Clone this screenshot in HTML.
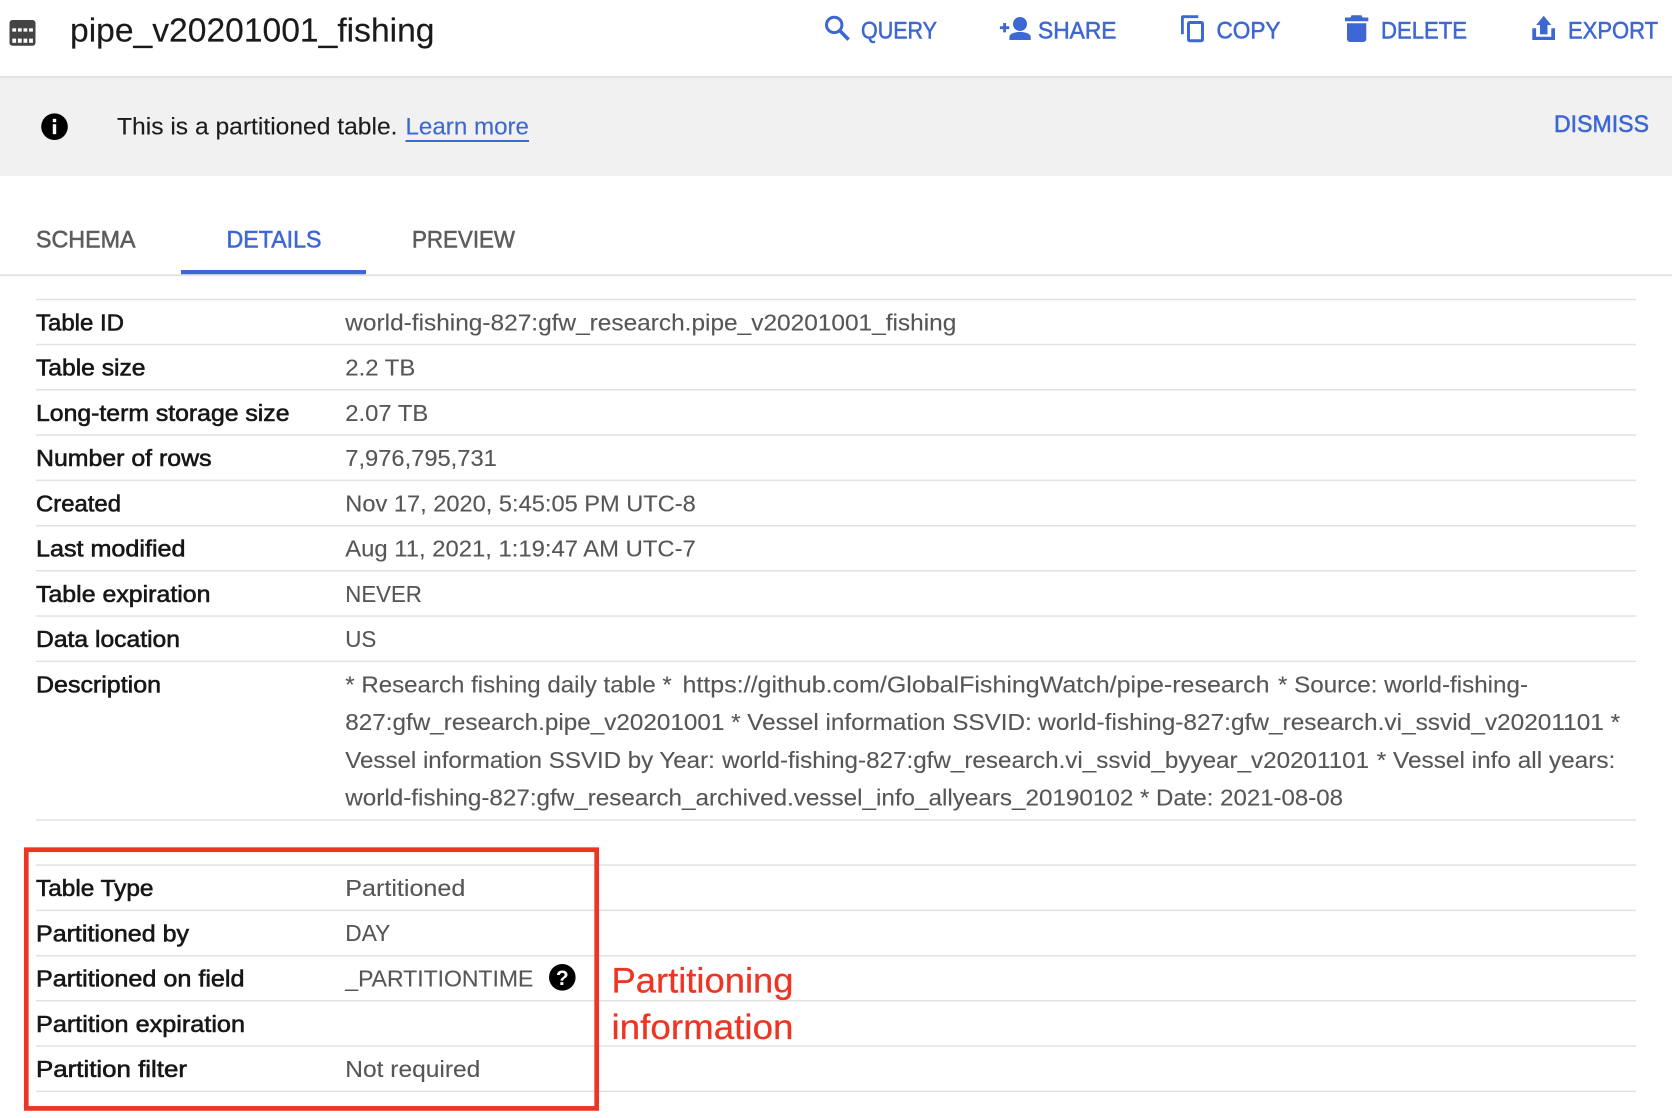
<!DOCTYPE html>
<html lang="en">
<head>
<meta charset="utf-8">
<title>pipe_v20201001_fishing</title>
<style>
html,body{margin:0;padding:0;background:#fff;width:1680px;height:1118px;overflow:hidden}
svg{display:block}
text{font-family:"Liberation Sans",sans-serif;white-space:pre}
.b{fill:#3d67d3;font-size:24.5px;stroke:#3d67d3;stroke-width:.55px}
.l{fill:#171717;font-size:23px;stroke:#171717;stroke-width:.6px}
.v{fill:#565656;font-size:23px;stroke:#565656;stroke-width:.12px}
.t{fill:#5c5c5c;font-size:24px;stroke:#5c5c5c;stroke-width:.55px}
.r{fill:#ee3524;font-size:35.5px;stroke:#ee3524;stroke-width:.25px}
.ln{fill:#e2e2e2}
.ic{fill:#3d67d3}
</style>
</head>
<body>
<svg xmlns="http://www.w3.org/2000/svg" width="1680" height="1118" viewBox="0 0 1680 1118">
<rect width="1680" height="1118" fill="#fff"/>

<!-- header -->
<rect x="9.5" y="20" width="26" height="25.7" rx="3" fill="#444"/>
<g fill="#fff">
<rect x="12.3" y="28.3" width="3.8" height="3.3"/><rect x="17.9" y="28.3" width="3.8" height="3.3"/><rect x="23.5" y="28.3" width="3.8" height="3.3"/><rect x="29.1" y="28.3" width="3.8" height="3.3"/>
<rect x="12.3" y="38.6" width="3.8" height="4.2"/><rect x="17.9" y="38.6" width="3.8" height="4.2"/><rect x="23.5" y="38.6" width="3.8" height="4.2"/><rect x="29.1" y="38.6" width="3.8" height="4.2"/>
</g>
<text x="70" y="41.7" font-size="33" fill="#1a1a1a" stroke="#1a1a1a" stroke-width=".15" textLength="364.5" lengthAdjust="spacingAndGlyphs">pipe_v20201001_fishing</text>

<!-- search -->
<circle cx="834.2" cy="24.9" r="7.7" fill="none" stroke="#3d67d3" stroke-width="3"/>
<path d="M839.8 30.6L848.6 39.6" fill="none" stroke="#3d67d3" stroke-width="3.6"/>
<text class="b" x="861" y="38.6" textLength="76" lengthAdjust="spacingAndGlyphs">QUERY</text>

<!-- share -->
<path class="ic" d="M1003.2 23h2.8v3.3h3.3v2.8h-3.3v3.3h-2.8v-3.3h-3.3v-2.8h3.3z"/>
<circle class="ic" cx="1020" cy="24" r="7"/>
<path class="ic" d="M1009.4 40v-3.2c0-3.4 6.9-4.9 10.6-4.9s10.7 1.5 10.7 4.9V40z"/>
<text class="b" x="1038" y="38.6" textLength="78.5" lengthAdjust="spacingAndGlyphs">SHARE</text>

<!-- copy -->
<path class="ic" d="M1183 15.3h15.3v2.8h-14.5v16.2h-2.8V17.3a2 2 0 0 1 2-2z"/>
<rect x="1188.5" y="22.5" width="14" height="18.2" rx="1.2" fill="none" stroke="#3d67d3" stroke-width="3"/>
<text class="b" x="1216.5" y="38.6" textLength="64" lengthAdjust="spacingAndGlyphs">COPY</text>

<!-- delete -->
<path class="ic" d="M1351.5 15.3h10l1 2.2h5.8v3.8h-23.3v-3.8h5.5z"/>
<path class="ic" d="M1347 23.3h19.3V39a3 3 0 0 1-3 3h-13.3a3 3 0 0 1-3-3z"/>
<text class="b" x="1381" y="38.6" textLength="86" lengthAdjust="spacingAndGlyphs">DELETE</text>

<!-- export -->
<path class="ic" d="M1543.7 15.7L1551.3 25h-3.8v9.4h-7.5V25h-3.8z"/>
<path class="ic" d="M1532.3 28.3h3.8v8.4h15.2v-8.4h3.7V40h-22.7z"/>
<text class="b" x="1568" y="38.6" textLength="90" lengthAdjust="spacingAndGlyphs">EXPORT</text>

<rect class="ln" x="0" y="76" width="1672" height="2"/>

<!-- banner -->
<rect x="0" y="78" width="1672" height="98" fill="#f1f1f1"/>
<circle cx="54.5" cy="126.7" r="13.3" fill="#000"/>
<rect x="52.8" y="118.8" width="3.4" height="3.4" fill="#fff"/>
<rect x="52.8" y="124.2" width="3.4" height="10" fill="#fff"/>
<text x="117" y="134.3" font-size="24.5" fill="#1c1c1c" stroke="#1c1c1c" stroke-width=".12" textLength="280.5" lengthAdjust="spacingAndGlyphs">This is a partitioned table.</text>
<text x="405.5" y="134.3" font-size="24.5" fill="#3d67d3" stroke="#3d67d3" stroke-width=".12" textLength="123.5" lengthAdjust="spacingAndGlyphs">Learn more</text>
<rect x="405.5" y="140" width="123.5" height="2" fill="#3d67d3"/>
<text class="b" x="1554" y="132" textLength="95" lengthAdjust="spacingAndGlyphs">DISMISS</text>

<!-- tabs -->
<text class="t" x="36" y="247.3" textLength="99.5" lengthAdjust="spacingAndGlyphs">SCHEMA</text>
<text class="t" style="fill:#3d67d3;stroke:#3d67d3" x="226.5" y="247.3" textLength="95" lengthAdjust="spacingAndGlyphs">DETAILS</text>
<text class="t" x="412" y="247.3" textLength="103" lengthAdjust="spacingAndGlyphs">PREVIEW</text>
<rect class="ln" x="0" y="274.3" width="1672" height="1.8"/>
<rect x="181" y="270" width="185" height="4.2" fill="#3d67d3"/>

<!-- row lines -->
<g class="ln">
<rect x="36" y="298.8" width="1600" height="1.5"/>
<rect x="36" y="343.8" width="1600" height="1.5"/>
<rect x="36" y="389" width="1600" height="1.5"/>
<rect x="36" y="434.3" width="1600" height="1.5"/>
<rect x="36" y="479.6" width="1600" height="1.5"/>
<rect x="36" y="525" width="1600" height="1.5"/>
<rect x="36" y="570" width="1600" height="1.5"/>
<rect x="36" y="615.3" width="1600" height="1.5"/>
<rect x="36" y="660.6" width="1600" height="1.5"/>
<rect x="36" y="819.3" width="1600" height="1.5"/>
<rect x="36" y="864.3" width="1600" height="1.5"/>
<rect x="36" y="909.6" width="1600" height="1.5"/>
<rect x="36" y="955" width="1600" height="1.5"/>
<rect x="36" y="1000" width="1600" height="1.5"/>
<rect x="36" y="1045.3" width="1600" height="1.5"/>
<rect x="36" y="1090.6" width="1600" height="1.5"/>
</g>

<!-- labels -->
<text class="l" x="36" y="330.3" textLength="88" lengthAdjust="spacingAndGlyphs">Table ID</text>
<text class="l" x="36" y="375.5" textLength="109.5" lengthAdjust="spacingAndGlyphs">Table size</text>
<text class="l" x="36" y="420.8" textLength="253.5" lengthAdjust="spacingAndGlyphs">Long-term storage size</text>
<text class="l" x="36" y="466" textLength="175.5" lengthAdjust="spacingAndGlyphs">Number of rows</text>
<text class="l" x="36" y="511.3" textLength="85" lengthAdjust="spacingAndGlyphs">Created</text>
<text class="l" x="36" y="556.6" textLength="149.5" lengthAdjust="spacingAndGlyphs">Last modified</text>
<text class="l" x="36" y="601.8" textLength="174.5" lengthAdjust="spacingAndGlyphs">Table expiration</text>
<text class="l" x="36" y="647" textLength="144" lengthAdjust="spacingAndGlyphs">Data location</text>
<text class="l" x="36" y="692.5" textLength="125" lengthAdjust="spacingAndGlyphs">Description</text>
<text class="l" x="36" y="896" textLength="117.5" lengthAdjust="spacingAndGlyphs">Table Type</text>
<text class="l" x="36" y="941.3" textLength="153" lengthAdjust="spacingAndGlyphs">Partitioned by</text>
<text class="l" x="36" y="986.6" textLength="208.5" lengthAdjust="spacingAndGlyphs">Partitioned on field</text>
<text class="l" x="36" y="1031.8" textLength="209" lengthAdjust="spacingAndGlyphs">Partition expiration</text>
<text class="l" x="36" y="1077" textLength="151" lengthAdjust="spacingAndGlyphs">Partition filter</text>

<!-- values -->
<text class="v" x="345.3" y="330.3" textLength="611" lengthAdjust="spacingAndGlyphs">world-fishing-827:gfw_research.pipe_v20201001_fishing</text>
<text class="v" x="345.3" y="375.5" textLength="70" lengthAdjust="spacingAndGlyphs">2.2 TB</text>
<text class="v" x="345.3" y="420.8" textLength="83" lengthAdjust="spacingAndGlyphs">2.07 TB</text>
<text class="v" x="345.3" y="466" textLength="151.5" lengthAdjust="spacingAndGlyphs">7,976,795,731</text>
<text class="v" x="345.3" y="511.3" textLength="350.5" lengthAdjust="spacingAndGlyphs">Nov 17, 2020, 5:45:05 PM UTC-8</text>
<text class="v" x="345.3" y="556.6" textLength="350.5" lengthAdjust="spacingAndGlyphs">Aug 11, 2021, 1:19:47 AM UTC-7</text>
<text class="v" x="345.3" y="601.8" textLength="76.5" lengthAdjust="spacingAndGlyphs">NEVER</text>
<text class="v" x="345.3" y="647" textLength="31" lengthAdjust="spacingAndGlyphs">US</text>

<text class="v" x="345.3" y="692.7" textLength="326.5" lengthAdjust="spacingAndGlyphs">* Research fishing daily table *</text>
<text class="v" x="682.5" y="692.7" textLength="587" lengthAdjust="spacingAndGlyphs">https://github.com/GlobalFishingWatch/pipe-research</text>
<text class="v" x="1278" y="692.7" textLength="250" lengthAdjust="spacingAndGlyphs">* Source: world-fishing-</text>

<text class="v" x="345.3" y="730.2" textLength="686.5" lengthAdjust="spacingAndGlyphs">827:gfw_research.pipe_v20201001 * Vessel information SSVID:</text>
<text class="v" x="1038.2" y="730.2" textLength="582" lengthAdjust="spacingAndGlyphs">world-fishing-827:gfw_research.vi_ssvid_v20201101 *</text>

<text class="v" x="345.3" y="767.8" textLength="369.5" lengthAdjust="spacingAndGlyphs">Vessel information SSVID by Year:</text>
<text class="v" x="722.1" y="767.8" textLength="647" lengthAdjust="spacingAndGlyphs">world-fishing-827:gfw_research.vi_ssvid_byyear_v20201101</text>
<text class="v" x="1376.8" y="767.8" textLength="238.5" lengthAdjust="spacingAndGlyphs">* Vessel info all years:</text>

<text class="v" x="345.3" y="805.4" textLength="788" lengthAdjust="spacingAndGlyphs">world-fishing-827:gfw_research_archived.vessel_info_allyears_20190102</text>
<text class="v" x="1140" y="805.4" textLength="203" lengthAdjust="spacingAndGlyphs">* Date: 2021-08-08</text>

<text class="v" x="345.3" y="896" textLength="120" lengthAdjust="spacingAndGlyphs">Partitioned</text>
<text class="v" x="345.3" y="941" textLength="45" lengthAdjust="spacingAndGlyphs">DAY</text>
<text class="v" x="345.3" y="986.6" textLength="188" lengthAdjust="spacingAndGlyphs">_PARTITIONTIME</text>
<text class="v" x="345.3" y="1077" textLength="135" lengthAdjust="spacingAndGlyphs">Not required</text>

<!-- help icon -->
<circle cx="562.3" cy="977.3" r="13.3" fill="#000"/>
<text x="562.3" y="984.8" font-size="21" font-weight="700" fill="#fff" text-anchor="middle">?</text>

<!-- annotation -->
<rect x="26.3" y="849.7" width="570.4" height="258.7" fill="none" stroke="#ee3524" stroke-width="4.7"/>
<text class="r" x="611.5" y="992.5" textLength="182" lengthAdjust="spacingAndGlyphs">Partitioning</text>
<text class="r" x="611.5" y="1038.8" textLength="182" lengthAdjust="spacingAndGlyphs">information</text>
</svg>
</body>
</html>
